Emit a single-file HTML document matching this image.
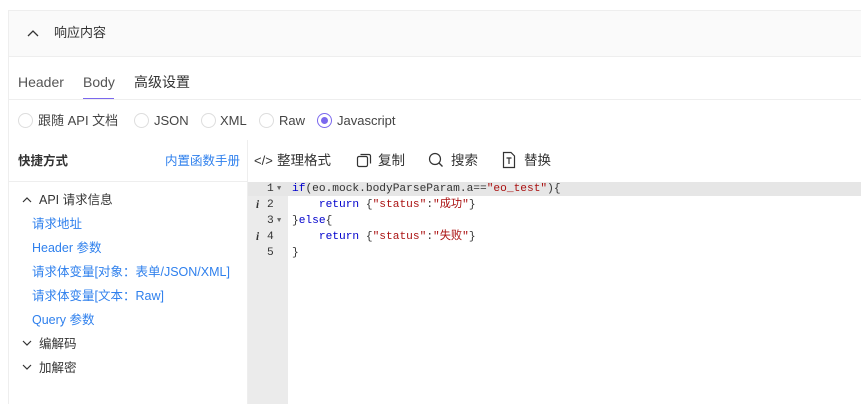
<!DOCTYPE html>
<html><head><meta charset="utf-8"><style>
*{margin:0;padding:0;box-sizing:border-box}
html,body{width:861px;height:404px;overflow:hidden}
body{background:#fff;font-family:"Liberation Sans","Noto Sans CJK SC",sans-serif;font-size:13px;color:#333;position:relative}
.box{position:absolute;left:8px;top:10px;width:853px;height:394px;border:1px solid #eee;border-right:none;border-bottom:none}
.hd{position:absolute;left:0;top:0;right:0;height:46px;background:#fafafa;border-bottom:1px solid #eee}
.a{position:absolute;white-space:nowrap;line-height:16px}
.radio{position:absolute;top:113px;width:15px;height:15px;border:1px solid #ddd;border-radius:50%}
.mono{font-family:"Liberation Mono","Noto Sans CJK SC",monospace;font-size:11.2px}
.blue{color:#2f80ed}
.g div{height:16px;position:relative}
</style></head><body>
<div class="box"><div class="hd"></div></div>
<svg class="a" style="left:27px;top:29px" width="12" height="8"><path d="M1 7 L6 2 L11 7" stroke="#333" stroke-width="1.3" fill="none"/></svg>
<div class="a" style="left:54px;top:25px">响应内容</div>
<div class="a" style="left:18px;top:74px;font-size:14px;color:#555">Header</div>
<div class="a" style="left:83px;top:74px;font-size:14px;color:#555">Body</div>
<div class="a" style="left:83px;top:98px;width:31px;height:2px;background:#7b68ee"></div>
<div class="a" style="left:134px;top:74px;font-size:14px;color:#333">高级设置</div>
<div class="a" style="left:8px;top:99px;width:853px;height:1px;background:#eee"></div>
<div class="radio" style="left:18px"></div><div class="a" style="left:38px;top:113px;color:#444">跟随 API 文档</div>
<div class="radio" style="left:134px"></div><div class="a" style="left:154px;top:113px;color:#444">JSON</div>
<div class="radio" style="left:201px"></div><div class="a" style="left:220px;top:113px;color:#444">XML</div>
<div class="radio" style="left:259px"></div><div class="a" style="left:279px;top:113px;color:#444">Raw</div>
<div class="radio" style="left:317px;border-color:#7b68ee"><div style="position:absolute;left:3px;top:3px;width:7px;height:7px;border-radius:50%;background:#7b68ee"></div></div>
<div class="a" style="left:337px;top:113px;color:#444">Javascript</div>
<div class="a" style="left:18px;top:153px;font-weight:bold;font-size:12.5px">快捷方式</div>
<div class="a blue" style="left:165px;top:153px;font-size:12.5px">内置函数手册</div>
<div class="a" style="left:8px;top:181px;width:240px;height:1px;background:#eee"></div>
<div class="a" style="left:247px;top:140px;width:1px;height:264px;background:#eee"></div>
<div class="a" style="left:254px;top:153px">&lt;/&gt;</div>
<div class="a" style="left:277px;top:153px;font-size:13.5px">整理格式</div>
<svg class="a" style="left:356px;top:152px" width="16" height="16"><rect x="1.5" y="4.5" width="10" height="10" rx="1.5" fill="none" stroke="#333" stroke-width="1.2"/><path d="M4.5 2.5 H13 a1.5 1.5 0 0 1 1.5 1.5 V11.5" fill="none" stroke="#333" stroke-width="1.2"/></svg>
<div class="a" style="left:378px;top:153px;font-size:13.5px">复制</div>
<svg class="a" style="left:428px;top:152px" width="16" height="16"><circle cx="7" cy="7" r="5.5" fill="none" stroke="#333" stroke-width="1.2"/><path d="M11 11 L14.5 14.5" stroke="#333" stroke-width="1.3"/></svg>
<div class="a" style="left:451px;top:153px;font-size:13.5px">搜索</div>
<svg class="a" style="left:502px;top:151px" width="14" height="18"><path d="M1.5 1.5 H9 L12.5 5 V16.5 H1.5 Z" fill="none" stroke="#333" stroke-width="1.2"/><path d="M4.5 7 H9.5 M7 7 V13" stroke="#333" stroke-width="1.2"/></svg>
<div class="a" style="left:524px;top:153px;font-size:13.5px">替换</div>
<div class="a" style="left:248px;top:182px;width:40px;height:222px;background:#ebebeb"></div>
<div class="a" style="left:248px;top:182px;width:613px;height:14px;background:#e6e6e6"></div>
<div class="a mono g" style="left:250px;top:181px;color:#333;width:36px">
<div><span style="position:absolute;left:17px">1</span><span style="position:absolute;left:27px;font-size:7px;color:#666">▼</span></div>
<div><i style="position:absolute;left:6px;font-family:'Liberation Serif';font-weight:bold">i</i><span style="position:absolute;left:17px">2</span></div>
<div><span style="position:absolute;left:17px">3</span><span style="position:absolute;left:27px;font-size:7px;color:#666">▼</span></div>
<div><i style="position:absolute;left:6px;font-family:'Liberation Serif';font-weight:bold">i</i><span style="position:absolute;left:17px">4</span></div>
<div><span style="position:absolute;left:17px">5</span></div>
</div>
<div class="a mono" style="left:292px;top:181px;color:#333">
<div><span style="color:#00c">if</span>(eo.mock.bodyParseParam.a==<span style="color:#a11">"eo_test"</span>){</div>
<div>&nbsp;&nbsp;&nbsp;&nbsp;<span style="color:#00c">return</span> {<span style="color:#a11">"status"</span>:<span style="color:#a11">"成功"</span>}</div>
<div>}<span style="color:#00c">else</span>{</div>
<div>&nbsp;&nbsp;&nbsp;&nbsp;<span style="color:#00c">return</span> {<span style="color:#a11">"status"</span>:<span style="color:#a11">"失败"</span>}</div>
<div>}</div>
</div>
<svg class="a" style="left:22px;top:196px" width="10" height="7"><path d="M1 6 L5 2 L9 6" stroke="#333" stroke-width="1.2" fill="none"/></svg>
<div class="a" style="left:39px;top:192px;font-size:12.5px">API 请求信息</div>
<div class="a blue" style="left:32px;top:216px;font-size:12.5px">请求地址</div>
<div class="a blue" style="left:32px;top:240px;font-size:12.5px">Header 参数</div>
<div class="a blue" style="left:32px;top:264px;font-size:12.5px">请求体变量[对象：表单/JSON/XML]</div>
<div class="a blue" style="left:32px;top:288px;font-size:12.5px">请求体变量[文本：Raw]</div>
<div class="a blue" style="left:32px;top:312px;font-size:12.5px">Query 参数</div>
<svg class="a" style="left:22px;top:340px" width="10" height="7"><path d="M1 1 L5 5 L9 1" stroke="#333" stroke-width="1.2" fill="none"/></svg>
<div class="a" style="left:39px;top:336px;font-size:12.5px">编解码</div>
<svg class="a" style="left:22px;top:364px" width="10" height="7"><path d="M1 1 L5 5 L9 1" stroke="#333" stroke-width="1.2" fill="none"/></svg>
<div class="a" style="left:39px;top:360px;font-size:12.5px">加解密</div>
</body></html>
